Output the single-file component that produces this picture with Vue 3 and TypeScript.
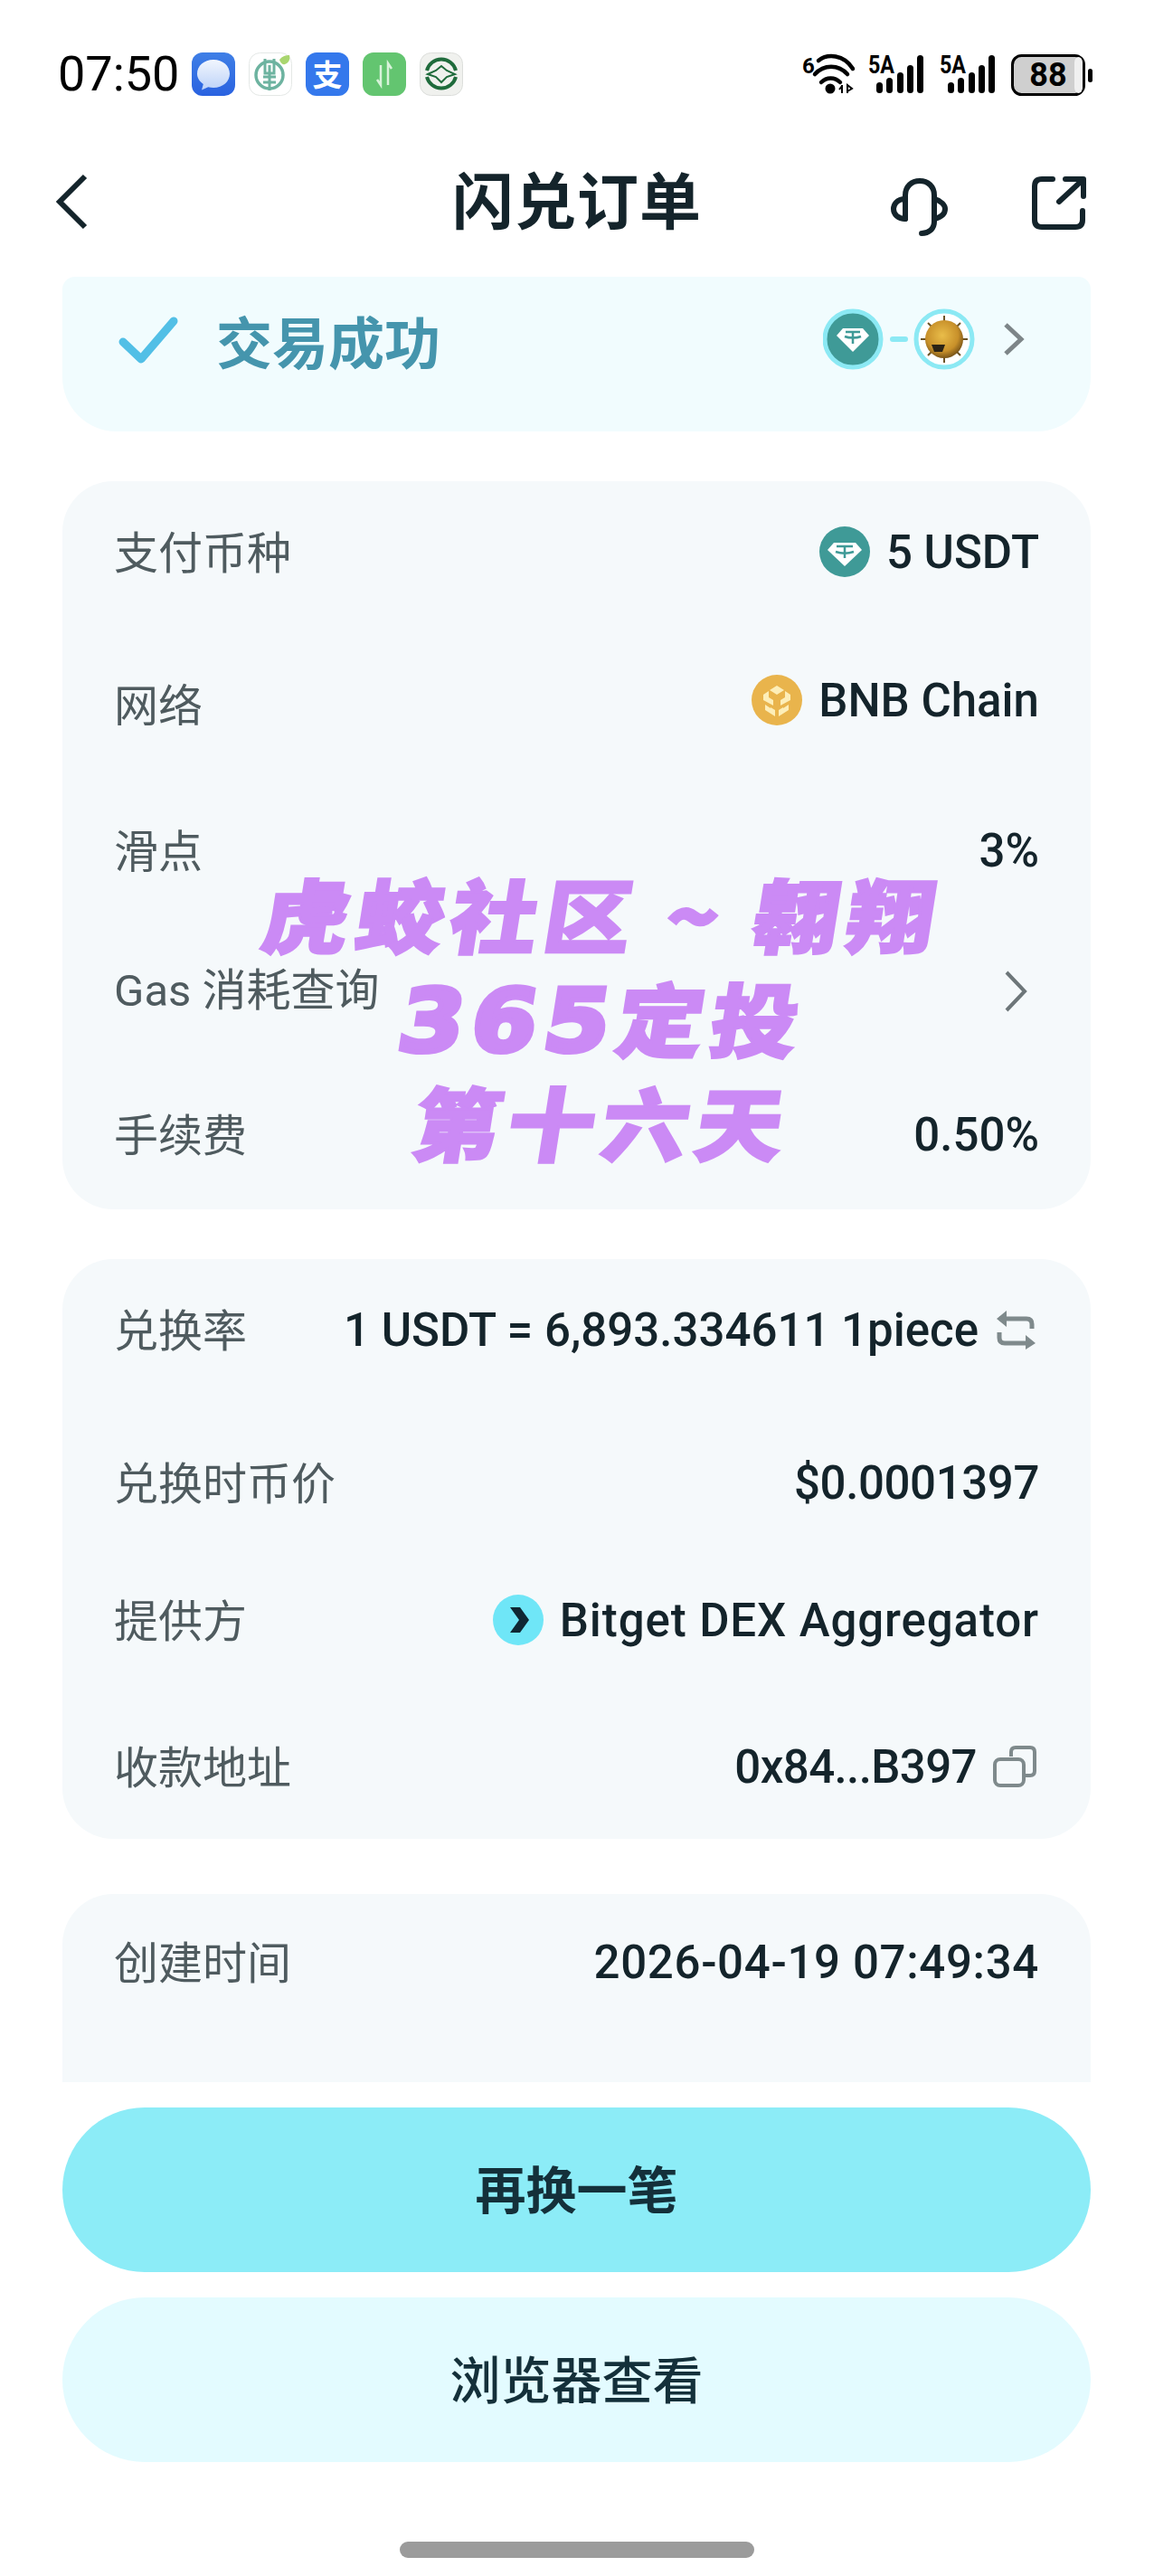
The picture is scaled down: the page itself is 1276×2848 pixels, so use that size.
<script setup lang="ts">
interface Row {
  label: string
  value: string
  gap: number
  icon?: 'usdt' | 'bnb' | 'bitget'
  trail?: 'swap' | 'copy' | 'chevron'
  track?: number
  lift?: number
}

// gap = distance to the previous row, the rows are not evenly spaced in the app
const feeRows: Row[] = [
  { label: '支付币种', value: '5 USDT', gap: 0, icon: 'usdt' },
  { label: '网络', value: 'BNB Chain', gap: 91, icon: 'bnb', lift: 5 },
  { label: '滑点', value: '3%', gap: 83 },
  { label: 'Gas 消耗查询', value: '', gap: 75, trail: 'chevron' },
  { label: '手续费', value: '0.50%', gap: 83 }
]

const rateRows: Row[] = [
  { label: '兑换率', value: '1 USDT = 6,893.334611 1piece', gap: 0, trail: 'swap' },
  { label: '兑换时币价', value: '$0.0001397', gap: 91, track: -0.4 },
  { label: '提供方', value: 'Bitget DEX Aggregator', gap: 74, icon: 'bitget', track: 0.9 },
  { label: '收款地址', value: '0x84...B397', gap: 84, trail: 'copy', track: -0.6 }
]

const cards = [
  { id: 'fee', rows: feeRows },
  { id: 'rate', rows: rateRows },
  { id: 'time', rows: [{ label: '创建时间', value: '2026-04-19 07:49:34', gap: 0, track: 0.65 }] as Row[] }
]
</script>

<template>
  <div class="page">
    <!-- 状态栏 -->
    <div class="status-bar">
      <div class="status-left">
        <span class="clock">07:50</span>
        <div class="app-icons">
          <svg class="app-icon" viewBox="0 0 48 48">
            <defs>
              <linearGradient id="msgBlue" x1="0" y1="0" x2="0" y2="1">
                <stop offset="0" stop-color="#3f7fe6" />
                <stop offset="1" stop-color="#2a62e0" />
              </linearGradient>
              <linearGradient id="msgWhite" x1="0" y1="0" x2="0" y2="1">
                <stop offset="0" stop-color="#f2f6fe" />
                <stop offset="1" stop-color="#bcd2f8" />
              </linearGradient>
            </defs>
            <rect width="48" height="48" rx="12" fill="url(#msgBlue)" />
            <path d="M24 8c10.500 0 18 7 18 15.500S34.500 39 24 39c-2 0-4-.3-5.800-.8L11 41.500l1.800-6.500C8.500 32 6 28 6 23.500 6 15 13.500 8 24 8z" fill="url(#msgWhite)" />
          </svg>
          <svg class="app-icon" viewBox="0 0 48 48">
            <rect x=".5" y=".5" width="47" height="47" rx="12" fill="#fff" stroke="#e4e8e6" />
            <circle cx="23" cy="25" r="15" fill="none" stroke="#6db3a0" stroke-width="3.500" />
            <path d="M18 7v16h10V7M23 14v28M16 27h14M16 33h14" fill="none" stroke="#6db3a0" stroke-width="3" />
            <path d="M34 8c3-4 7-5 11-5 1 4 0 8-5 10-3 1-5-2-6-5z" fill="#a9d66f" />
          </svg>
          <svg class="app-icon" viewBox="0 0 48 48">
            <rect width="48" height="48" rx="12" fill="#3478ec" />
            <text x="24" y="37" text-anchor="middle" class="zhi">支</text>
          </svg>
          <svg class="app-icon" viewBox="0 0 48 48">
            <rect width="48" height="48" rx="12" fill="#63c570" />
            <path d="M20 14v22l-4-6M28 36V12l4 6" fill="none" stroke="#d8f3da" stroke-width="2.500" />
          </svg>
          <svg class="app-icon" viewBox="0 0 48 48">
            <rect x=".5" y=".5" width="47" height="47" rx="12" fill="#f0f1ee" stroke="#dcdedb" />
            <path d="M8 20a16.500 16.500 0 0 1 32 0M8 27a16.500 16.500 0 0 0 32 0" fill="none" stroke="#1f6b3c" stroke-width="4" />
            <path d="M9 24l9-4 6-5 6 5 9 4-9 3-6 6-6-6z" fill="none" stroke="#1f6b3c" stroke-width="2" />
          </svg>
        </div>
      </div>
      <div class="status-right">
        <svg class="wifi" width="60" height="48" viewBox="0 0 60 48">
          <text x="0" y="24" class="tiny-bold">6</text>
          <path d="M18 10C28 2 46 3 56 19M14 25C24 14 40 14 50 25M21 34C27 28 36 28 42 34" fill="none" stroke="#000" stroke-width="4.500" stroke-linecap="round" />
          <circle cx="31" cy="41" r="5.500" fill="#000" />
          <path d="M44 46V37M50 46V37l5 4-5 3M41 42l3-4" fill="none" stroke="#000" stroke-width="2" />
        </svg>
        <svg v-for="n in 2" :key="n" class="signal" width="62" height="51" viewBox="0 -8 62 51">
          <text x="0" y="20" class="tiny-bold sig" textLength="29" lengthAdjust="spacingAndGlyphs">5A</text>
          <rect x="9" y="30" width="7" height="12" rx="3.500" />
          <rect x="20" y="25" width="7" height="17" rx="3.500" />
          <rect x="32" y="19" width="7" height="23" rx="3.500" />
          <rect x="43" y="11" width="7" height="31" rx="3.500" />
          <rect x="54" y="0" width="7" height="42" rx="3.500" />
        </svg>
        <svg class="battery" width="90" height="46" viewBox="0 0 90 46">
          <rect x="1.500" y="1.500" width="79" height="43" rx="10" fill="#cfcfcf" stroke="#000" stroke-width="3" />
          <rect x="70" y="3" width="9" height="40" rx="6" fill="#f0f0f0" />
          <text x="41" y="35" text-anchor="middle" class="batt-num">88</text>
          <rect x="85" y="16" width="5" height="15" rx="2.500" fill="#000" />
        </svg>
      </div>
    </div>

    <!-- ナビゲーション -->
    <div class="nav-bar">
      <svg class="nav-back" width="40" height="64" viewBox="0 0 40 64">
        <path d="M34 4L6 32l28 28" fill="none" stroke="#14242b" stroke-width="6" />
      </svg>
      <h1 class="nav-title">闪兑订单</h1>
      <div class="nav-actions">
        <svg width="76" height="76" viewBox="0 0 76 76">
          <path d="M22 51V25C22 15 29 9 38 9s16 6 16 16v29c0 8-6 13-14 13" fill="none" stroke="#14242b" stroke-width="6" stroke-linecap="round" />
          <path d="M22 29C12 29 9 36 9 40c0 6 5 11 13 11M54 29c8 2 12 7 12 11 0 5-4 9-12 11" fill="none" stroke="#14242b" stroke-width="6" stroke-linecap="round" />
        </svg>
        <svg width="66" height="66" viewBox="0 0 66 66">
          <path d="M26 6H14Q6 6 6 14v37q0 8 8 8h37q8 0 8-8V41" fill="none" stroke="#14242b" stroke-width="6" stroke-linecap="round" />
          <path d="M33 31L59 7M40 6h20v19" fill="none" stroke="#14242b" stroke-width="6" stroke-linecap="round" stroke-linejoin="round" />
        </svg>
      </div>
    </div>

    <div class="content">
      <div class="success-card">
        <div class="success-left">
          <svg width="66" height="52" viewBox="0 0 66 52">
            <path d="M5 28l20 19L61 5" fill="none" stroke="#52bfe6" stroke-width="9" stroke-linecap="round" stroke-linejoin="round" />
          </svg>
          <span class="success-text">交易成功</span>
        </div>
        <div class="success-right">
          <svg class="pair" width="168" height="68" viewBox="0 0 168 68">
            <defs>
              <radialGradient id="goldCoin" cx=".45" cy=".4" r=".6">
                <stop offset="0" stop-color="#e9bd4a" />
                <stop offset=".7" stop-color="#c8902a" />
                <stop offset="1" stop-color="#7a5518" />
              </radialGradient>
            </defs>
            <circle cx="33" cy="34" r="31" fill="#3f9a97" stroke="#8ce9f4" stroke-width="5" />
            <path d="M22 22H44L51 30 33 48 15 30z" fill="#fff" />
            <path d="M25 26h16M33 26v13M24 31c5 2 13 2 18 0" fill="none" stroke="#3f9a97" stroke-width="2.500" />
            <rect x="74" y="31" width="20" height="6" rx="3" fill="#8ce9f4" />
            <circle cx="134" cy="34" r="31" fill="#fff" stroke="#8ce9f4" stroke-width="5" />
            <path d="M134 8v52M108 34h52M116 16l36 36M152 16l-36 36" stroke="#6b5326" stroke-width="2" />
            <circle cx="134" cy="34" r="21" fill="url(#goldCoin)" />
            <path d="M120 40h15l-3 8h-9z" fill="#2c2416" />
          </svg>
          <svg width="24" height="38" viewBox="0 0 24 38">
            <path d="M3 3l17 16L3 35" fill="none" stroke="#7d8588" stroke-width="5" />
          </svg>
        </div>
      </div>

      <div v-for="card in cards" :key="card.id" class="info-card" :class="card.id">
        <div
          v-for="row in card.rows"
          :key="row.label"
          class="row"
          :style="{ marginTop: row.gap + 'px' }"
        >
          <span class="row-label">{{ row.label }}</span>
          <div class="row-value" :style="{ marginBottom: (row.lift || 0) * 2 + 'px' }">
            <svg v-if="row.icon === 'usdt'" width="56" height="56" viewBox="0 0 56 56">
              <circle cx="28" cy="28" r="28" fill="#3f9a97" />
              <path d="M16 18H40L47 26 28 44 9 26z" fill="#fff" />
              <path d="M19 22h18M28 22v13M18 28c6 2 14 2 20 0" fill="none" stroke="#3f9a97" stroke-width="2.500" />
            </svg>
            <svg v-if="row.icon === 'bnb'" width="56" height="56" viewBox="0 0 56 56">
              <circle cx="28" cy="28" r="28" fill="#e9b44c" />
              <path d="M28 12l8 5-8 5-8-5zM13 22l6-4v7l5 3v6l-11-6zM43 22l-6-4v7l-5 3v6l11-6zM15 33l6 4v-1l5 3v7l-11-7zM41 33l-6 4v-1l-5 3v7l11-7z" fill="#fdeeb8" />
            </svg>
            <svg v-if="row.icon === 'bitget'" width="56" height="56" viewBox="0 0 56 56">
              <circle cx="28" cy="28" r="28" fill="#6fe6f7" />
              <path d="M19 14h11l10 14-10 14H19l10-14z" fill="#0f2733" />
            </svg>
            <span v-if="row.value" :style="{ letterSpacing: (row.track || 0) + 'px' }">{{ row.value }}</span>
            <svg v-if="row.trail === 'chevron'" class="trail chevron" width="26" height="48" viewBox="0 0 26 48">
              <path d="M3 3l20 21L3 45" fill="none" stroke="#6d7679" stroke-width="4" />
            </svg>
            <svg v-if="row.trail === 'swap'" class="trail" width="46" height="44" viewBox="0 0 46 44">
              <path d="M5 10h30q6 0 6 6v5M5 25v6q0 6 6 6h29" fill="none" stroke="#7f8a8c" stroke-width="5" />
              <path d="M13 1L2 10l11 9zM34 28l11 9-11 7z" fill="#7f8a8c" />
            </svg>
            <svg v-if="row.trail === 'copy'" class="trail" width="48" height="46" viewBox="0 0 48 46">
              <path d="M20 12V7q0-5 5-5h16q5 0 5 5v21q0 5-5 5h-5" fill="none" stroke="#7f8a8c" stroke-width="4" />
              <rect x="2" y="15" width="32" height="29" rx="6" fill="none" stroke="#7f8a8c" stroke-width="4" />
            </svg>
          </div>
        </div>
      </div>
    </div>

    <div class="footer">
      <button class="btn primary">再换一笔</button>
      <button class="btn secondary">浏览器查看</button>
    </div>
    <div class="home-bar"></div>

    <!-- 水印 -->
    <div class="watermark">
      <div class="mark-line">虎蛟社区 ~ 翱翔</div>
      <div class="mark-line"><span class="mark-digits">365</span>定投</div>
      <div class="mark-line">第十六天</div>
    </div>
  </div>
</template>

<style>
html,
body {
  margin: 0;
  background: #ffffff;
}
</style>

<style scoped>
.page {
  position: relative;
  width: 1276px;
  height: 2848px;
  overflow: hidden;
  background: #ffffff;
  display: flex;
  flex-direction: column;
  font-family: Roboto, "Noto Sans CJK SC", sans-serif;
  color: #14242b;
}

.status-bar {
  height: 150px;
  flex: none;
  display: flex;
  align-items: flex-start;
  justify-content: space-between;
  padding: 57px 68px 0 64px;
  box-sizing: border-box;
}

.status-left {
  display: flex;
  align-items: center;
  gap: 14px;
}

.clock {
  font-size: 54px;
  line-height: 50px;
  color: #000;
}

.app-icons {
  display: flex;
  gap: 15px;
}

.app-icon {
  width: 48px;
  height: 48px;
}

.zhi {
  font-size: 33px;
  font-weight: 700;
  fill: #fff;
  font-family: "Noto Sans CJK SC", sans-serif;
}

.status-right {
  display: flex;
  align-items: flex-start;
  gap: 17px;
}

.wifi {
  margin-right: -4px;
}

.signal {
  margin-top: -4px;
}

.battery {
  margin-top: 3px;
}

.tiny-bold {
  font-size: 24px;
  font-weight: 700;
  font-family: Roboto, sans-serif;
}

.tiny-bold.sig {
  font-size: 28px;
}

.batt-num {
  font-size: 36px;
  font-weight: 700;
  font-family: Roboto, sans-serif;
}

.nav-bar {
  position: relative;
  height: 156px;
  flex: none;
  display: flex;
  align-items: flex-start;
  justify-content: space-between;
  padding: 41px 72px 0 60px;
  box-sizing: border-box;
}

.nav-title {
  position: absolute;
  left: 0;
  right: 0;
  top: 3px;
  margin: 0;
  font-size: 68px;
  line-height: 144px;
  font-weight: 700;
  text-align: center;
  letter-spacing: 1px;
}

.nav-actions {
  display: flex;
  align-items: flex-start;
  gap: 83px;
}

.nav-back,
.nav-actions {
  position: relative;
  z-index: 1;
}

.nav-actions svg:last-child {
  margin-top: 1px;
}

.content {
  flex: none;
  height: 1996px;
  padding: 0 70px 0 69px;
  box-sizing: border-box;
  display: flex;
  flex-direction: column;
  gap: 55px;
  overflow: hidden;
}

.success-card {
  flex: none;
  height: 171px;
  background: #f1fcfe;
  border-radius: 14px 14px 60px 60px;
  display: flex;
  align-items: flex-start;
  justify-content: space-between;
  padding: 35px 73px 0 62px;
  box-sizing: border-box;
}

.success-left {
  display: flex;
  align-items: center;
  gap: 42px;
  margin-top: 1px;
}

.success-text {
  font-size: 62px;
  line-height: 68px;
  font-weight: 700;
  color: #4595ad;
  font-family: "Noto Sans CJK SC", sans-serif;
}

.success-right {
  display: flex;
  align-items: center;
  gap: 31px;
}

.info-card {
  flex: none;
  background: #f5f9fb;
  border-radius: 56px;
  padding: 39px 57px 0 57px;
  box-sizing: border-box;
}

.info-card.fee {
  height: 805px;
}

.info-card.rate {
  height: 641px;
  margin-bottom: 6px;
}

.info-card.time {
  height: 208px;
  border-radius: 56px 56px 0 0;
  padding-top: 36px;
}

.row {
  height: 78px;
  display: flex;
  align-items: center;
  justify-content: space-between;
}

.row-label {
  font-size: 49px;
  color: #4f5b5f;
  margin-bottom: 6px;
}

.row-value {
  display: flex;
  align-items: center;
  gap: 18px;
  font-size: 51px;
  font-weight: 500;
  white-space: nowrap;
}

.trail {
  margin-right: 3px;
}

.trail.chevron {
  margin-right: 13px;
  margin-top: 5px;
}

.footer {
  flex: none;
  padding: 28px 70px 0 69px;
  display: flex;
  flex-direction: column;
  gap: 28px;
}

.btn {
  height: 182px;
  border: none;
  border-radius: 91px;
  padding: 0 0 8px;
  font-family: "Noto Sans CJK SC", sans-serif;
  font-size: 56px;
  color: #14303a;
}

.btn.primary {
  background: #8cecf7;
  font-weight: 700;
}

.btn.secondary {
  background: #e3fbff;
  font-weight: 500;
}

.home-bar {
  position: absolute;
  left: 442px;
  top: 2810px;
  width: 392px;
  height: 18px;
  border-radius: 9px;
  background: #9b9b9b;
}

.watermark {
  position: absolute;
  left: 0;
  right: 0;
  top: 951px;
  text-align: center;
  color: #cb8af5;
  font-family: "Noto Sans CJK SC", sans-serif;
  font-weight: 900;
  pointer-events: none;
}

.mark-line {
  height: 115px;
  line-height: 115px;
  font-size: 96px;
  letter-spacing: 8px;
  -webkit-text-stroke: 3px #cb8af5;
  transform: skewX(-9deg) scaleY(0.92);
  white-space: nowrap;
  padding-left: 58px;
}

.mark-digits {
  font-family: "DejaVu Sans", sans-serif;
  font-size: 104px;
  font-weight: 700;
  -webkit-text-stroke: 6px #cb8af5;
}
</style>
